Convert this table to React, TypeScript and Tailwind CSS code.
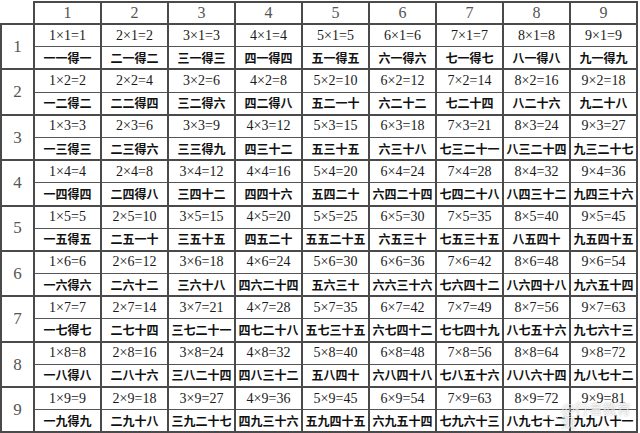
import React from "react"

const CN = ["", "一", "二", "三", "四", "五", "六", "七", "八", "九"]

function cnProduct(p: number) {
  if (p < 10) return "得" + CN[p]
  const tens = Math.floor(p / 10)
  const ones = p % 10
  if (tens === 1) return ones === 0 ? "一十" : "十" + CN[ones]
  return CN[tens] + "十" + CN[ones]
}

const NUMS = [1, 2, 3, 4, 5, 6, 7, 8, 9]

const major = "border-[2px] border-solid border-[#4a4a4a]"

export default function App() {
  return (
    <div className="relative w-[640px] h-[433px] bg-white overflow-hidden">
      <table className="border-collapse table-fixed w-[638px] mt-[1px]">
        <colgroup>
          <col className="w-[33px]" />
          {NUMS.map((n) => (
            <col key={n} />
          ))}
        </colgroup>
        <thead>
          <tr className="h-[22px]">
            <th className="p-0" />
            {NUMS.map((n) => (
              <th
                key={n}
                className={`${major} p-0 text-center font-normal text-[16px] leading-none text-[#555] [font-family:'Liberation_Serif',serif]`}
              >
                {n}
              </th>
            ))}
          </tr>
        </thead>
        <tbody>
          {NUMS.map((row) => (
            <React.Fragment key={row}>
              <tr className="h-[22.7px]">
                <td
                  rowSpan={2}
                  className={`${major} p-0 text-center text-[17px] text-[#555] [font-family:'Liberation_Serif',serif]`}
                >
                  {row}
                </td>
                {NUMS.map((col) => (
                  <td
                    key={col}
                    className={`${major} border-b-[1px] border-b-[#555] p-0 text-center text-[14px] leading-none text-[#1a1a1a] [font-family:'Liberation_Serif',serif]`}
                  >
                    {col}×{row}={col * row}
                  </td>
                ))}
              </tr>
              <tr className="h-[22.7px]">
                {NUMS.map((col) => (
                  <td
                    key={col}
                    className={`${major} border-t-[1px] border-t-[#555] p-0 text-center text-[12px] leading-none font-bold text-[#111] [font-family:'Noto_Sans_CJK_SC',sans-serif]`}
                  >
                    {CN[col] + CN[row] + cnProduct(col * row)}
                  </td>
                ))}
              </tr>
            </React.Fragment>
          ))}
        </tbody>
      </table>

      {/* watermark */}
      <div className="absolute left-[548px] top-[401px] flex items-center gap-[3px] text-white/75 [text-shadow:0_0_2px_rgba(0,0,0,0.3)]">
        <svg width="11" height="11" viewBox="0 0 12 12" className="opacity-80">
          <circle cx="6" cy="6" r="5" fill="none" stroke="white" strokeWidth="1.2" />
          <path d="M3.5 6h5M6 3.5v5" stroke="white" strokeWidth="1.2" />
        </svg>
        <span className="text-[14px] leading-none [font-family:'Noto_Sans_CJK_SC',sans-serif]">@行者教育观</span>
      </div>
    </div>
  )
}
